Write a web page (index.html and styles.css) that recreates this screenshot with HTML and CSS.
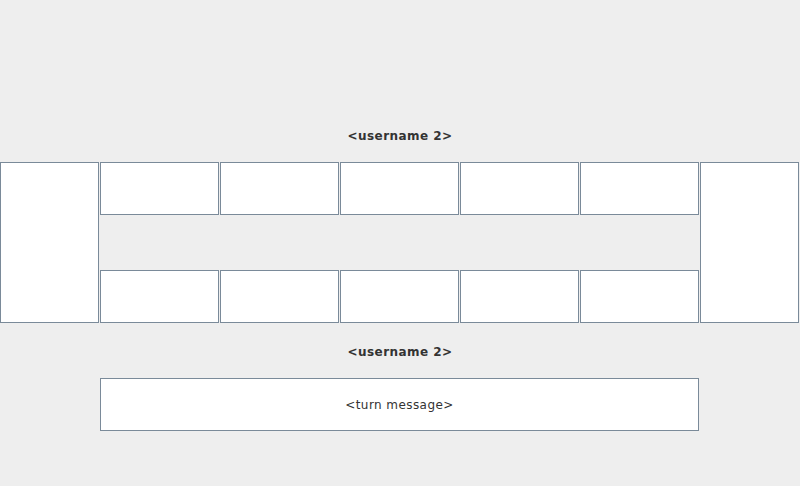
FILE: index.html
```html
<!DOCTYPE html>
<html>
<head>
<meta charset="utf-8">
<link rel="stylesheet" href="styles.css">
</head>
<body>
<div class="app">
  <div class="label label-top">&lt;username 2&gt;</div>
  <div class="board">
    <div class="cell side side-left"></div>
    <div class="cell pit r1 c2"></div>
    <div class="cell pit r1 c3"></div>
    <div class="cell pit r1 c4"></div>
    <div class="cell pit r1 c5"></div>
    <div class="cell pit r1 c6"></div>
    <div class="cell side side-right"></div>
    <div class="cell pit r3 c2"></div>
    <div class="cell pit r3 c3"></div>
    <div class="cell pit r3 c4"></div>
    <div class="cell pit r3 c5"></div>
    <div class="cell pit r3 c6"></div>
  </div>
  <div class="label label-bottom">&lt;username 2&gt;</div>
  <div class="turn-row">
    <div class="turn-box">&lt;turn message&gt;</div>
  </div>
</div>
</body>
</html>
```
FILE: styles.css
```css
html, body {
  margin: 0;
  padding: 0;
  background: #eeeeee;
}
.app {
  width: 800px;
  height: 486px;
  display: flex;
  flex-direction: column;
  font-family: "DejaVu Sans", sans-serif;
  color: #333333;
}
.label {
  height: 16px;
  line-height: 16px;
  font-size: 12px;
  font-weight: bold;
  letter-spacing: 0.45px;
  text-align: center;
}
.label-top {
  margin-top: 128px;
}
.board {
  margin-top: 18px;
  display: grid;
  grid-template-columns: 99px repeat(5, 119px) 99px;
  grid-template-rows: 53px 55px 53px;
  column-gap: 1px;
  width: 800px;
}
.cell {
  box-sizing: border-box;
  background: #ffffff;
  border: 1px solid #7a8a99;
}
.side-left {
  grid-column: 1;
  grid-row: 1 / 4;
}
.side-right {
  grid-column: 7;
  grid-row: 1 / 4;
}
.r1 { grid-row: 1; }
.r3 { grid-row: 3; }
.c2 { grid-column: 2; }
.c3 { grid-column: 3; }
.c4 { grid-column: 4; }
.c5 { grid-column: 5; }
.c6 { grid-column: 6; }
.label-bottom {
  margin-top: 21px;
}
.turn-row {
  margin-top: 18px;
  padding-left: 100px;
}
.turn-box {
  box-sizing: border-box;
  width: 599px;
  height: 53px;
  background: #ffffff;
  border: 1px solid #7a8a99;
  display: flex;
  align-items: center;
  justify-content: center;
  font-size: 12px;
  letter-spacing: 0.43px;
  color: #333333;
}
```
